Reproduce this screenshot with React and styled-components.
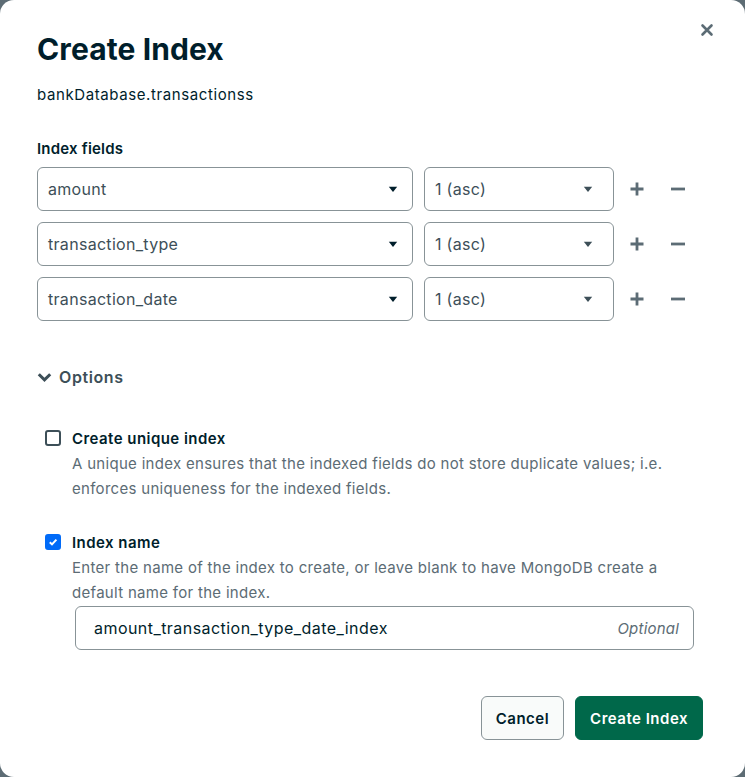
import styled, { createGlobalStyle } from "styled-components";

const GlobalStyle = createGlobalStyle`
  html, body {
    margin: 0;
    padding: 0;
    background: #5d6c74;
  }
  * {
    box-sizing: border-box;
  }
`;

const Modal = styled.div`
  position: relative;
  width: 745px;
  height: 777px;
  background: #ffffff;
  border-radius: 14px;
  padding: 29px 42px 0 37px;
  font-family: Inter, "Noto Sans", sans-serif;
  color: #001e2b;
  display: flex;
  flex-direction: column;
`;

const CloseButton = styled.button`
  position: absolute;
  top: 23px;
  right: 31px;
  width: 14px;
  height: 14px;
  padding: 0;
  border: none;
  background: none;
  cursor: pointer;
  display: flex;
`;

const Title = styled.h1`
  margin: 0;
  font-size: 30px;
  line-height: 40px;
  font-weight: 700;
  letter-spacing: 0.1px;
`;

const Subtitle = styled.p`
  margin: 16px 0 0 0;
  font-size: 15px;
  line-height: 20px;
  letter-spacing: 0.6px;
`;

const SectionLabel = styled.div`
  margin-top: 34px;
  font-size: 15px;
  line-height: 20px;
  font-weight: 600;
  letter-spacing: 0.2px;
`;

const FieldList = styled.div`
  margin-top: 8px;
  display: flex;
  flex-direction: column;
  gap: 11px;
`;

const FieldRow = styled.div`
  display: flex;
  align-items: center;
  gap: 11px;
`;

const Select = styled.div`
  width: ${(p) => p.width}px;
  height: 44px;
  border: 1px solid #889397;
  border-radius: 6px;
  display: flex;
  align-items: center;
  justify-content: space-between;
  padding: 0 ${(p) => p.right}px 0 10px;
  font-size: 16px;
  letter-spacing: 0.3px;
  color: #3d4f58;
`;

const IconButton = styled.button`
  width: 20px;
  height: 20px;
  padding: 0;
  border: none;
  background: none;
  display: flex;
  align-items: center;
  justify-content: center;
  margin-left: ${(p) => p.offset || 0}px;
  cursor: pointer;
`;

const OptionsToggle = styled.button`
  margin-top: 44px;
  align-self: flex-start;
  display: flex;
  align-items: center;
  gap: 7px;
  padding: 0;
  border: none;
  background: none;
  font-family: inherit;
  font-size: 16px;
  line-height: 24px;
  font-weight: 600;
  letter-spacing: 0.6px;
  color: #3d4f58;
  cursor: pointer;
`;

const Option = styled.div`
  margin-top: ${(p) => p.top}px;
  display: grid;
  grid-template-columns: 16px 1fr;
  column-gap: 11px;
  padding-left: 8px;
`;

const Box = styled.span`
  width: 16px;
  height: 16px;
  margin-top: 0;
  border-radius: 3px;
  border: 2px solid ${(p) => (p.checked ? "#016bf8" : "#3d4f58")};
  background: ${(p) => (p.checked ? "#016bf8" : "#ffffff")};
  display: flex;
  align-items: center;
  justify-content: center;
`;

const OptionTitle = styled.div`
  font-size: 15px;
  line-height: 18px;
  font-weight: 600;
  letter-spacing: 0.45px;
  color: #001e2b;
`;

const OptionDesc = styled.div`
  grid-column: 2;
  font-size: 15px;
  line-height: 25px;
  letter-spacing: 0.3px;
  color: #5c6c75;
  margin-top: 3px;
`;

const NameInput = styled.div`
  grid-column: 1 / 3;
  margin: 1px 9px 0 30px;
  height: 44px;
  border: 1px solid #889397;
  border-radius: 6px;
  display: flex;
  align-items: center;
  justify-content: space-between;
  padding: 0 14px 0 18px;
  font-size: 16px;
  letter-spacing: 0.45px;
  color: #001e2b;
`;

const Hint = styled.span`
  font-style: italic;
  color: #5c6c75;
  font-size: 15px;
  letter-spacing: 0.2px;
`;

const Footer = styled.div`
  margin-top: 46px;
  display: flex;
  justify-content: flex-end;
  gap: 11px;
`;

const Button = styled.button`
  height: 44px;
  padding: 0 ${(p) => (p.primary ? 14 : 14)}px;
  border-radius: 6px;
  border: 1px solid ${(p) => (p.primary ? "#00684a" : "#889397")};
  background: ${(p) => (p.primary ? "#00684a" : "#f9fbfa")};
  color: ${(p) => (p.primary ? "#ffffff" : "#001e2b")};
  font-family: inherit;
  font-size: 15px;
  font-weight: 600;
  letter-spacing: 0.5px;
  cursor: pointer;
`;

function Caret({ color }) {
  return (
    <svg width="10" height="7" viewBox="0 0 10 7">
      <path d="M0.8 0.8h8.4L5 6z" fill={color} />
    </svg>
  );
}

const fields = ["amount", "transaction_type", "transaction_date"];

function App() {
  return (
    <>
      <GlobalStyle />
      <Modal>
        <CloseButton aria-label="Close">
          <svg width="14" height="14" viewBox="0 0 14 14">
            <path
              d="M2.5 2.5l9 9M11.5 2.5l-9 9"
              stroke="#5c6c75"
              strokeWidth="2.6"
              strokeLinecap="round"
            />
          </svg>
        </CloseButton>
        <Title>Create Index</Title>
        <Subtitle>bankDatabase.transactionss</Subtitle>

        <SectionLabel>Index fields</SectionLabel>
        <FieldList>
          {fields.map((f) => (
            <FieldRow key={f}>
              <Select width={376} right={14}>
                <span>{f}</span>
                <Caret color="#001e2b" />
              </Select>
              <Select width={190} right={20}>
                <span>1 (asc)</span>
                <Caret color="#3d4f58" />
              </Select>
              <IconButton offset={2} aria-label="Add">
                <svg width="16" height="16" viewBox="0 0 16 16">
                  <path
                    d="M8 1.5v13M1.5 8h13"
                    stroke="#5c6c75"
                    strokeWidth="2.8"
                  />
                </svg>
              </IconButton>
              <IconButton offset={10} aria-label="Remove">
                <svg width="16" height="16" viewBox="0 0 16 16">
                  <path d="M1 8h14" stroke="#5c6c75" strokeWidth="2.8" />
                </svg>
              </IconButton>
            </FieldRow>
          ))}
        </FieldList>

        <OptionsToggle>
          <svg width="15" height="11" viewBox="0 0 15 11">
            <path
              d="M1.8 2.2l5.7 5.7 5.7-5.7"
              stroke="#3d4f58"
              strokeWidth="3"
              fill="none"
            />
          </svg>
          Options
        </OptionsToggle>

        <Option top={41}>
          <Box />
          <OptionTitle>Create unique index</OptionTitle>
          <OptionDesc>
            A unique index ensures that the indexed fields do not store
            duplicate values; i.e.
            <br />
            enforces uniqueness for the indexed fields.
          </OptionDesc>
        </Option>

        <Option top={33}>
          <Box checked>
            <svg width="10" height="10" viewBox="0 0 10 10">
              <path
                d="M1.8 5.2l2.2 2.2L8.4 2.6"
                stroke="#ffffff"
                strokeWidth="2"
                fill="none"
              />
            </svg>
          </Box>
          <OptionTitle>Index name</OptionTitle>
          <OptionDesc>
            Enter the name of the index to create, or leave blank to have
            MongoDB create a
            <br />
            default name for the index.
          </OptionDesc>
          <NameInput>
            <span>amount_transaction_type_date_index</span>
            <Hint>Optional</Hint>
          </NameInput>
        </Option>

        <Footer>
          <Button>Cancel</Button>
          <Button primary>Create Index</Button>
        </Footer>
      </Modal>
    </>
  );
}

export default App;
